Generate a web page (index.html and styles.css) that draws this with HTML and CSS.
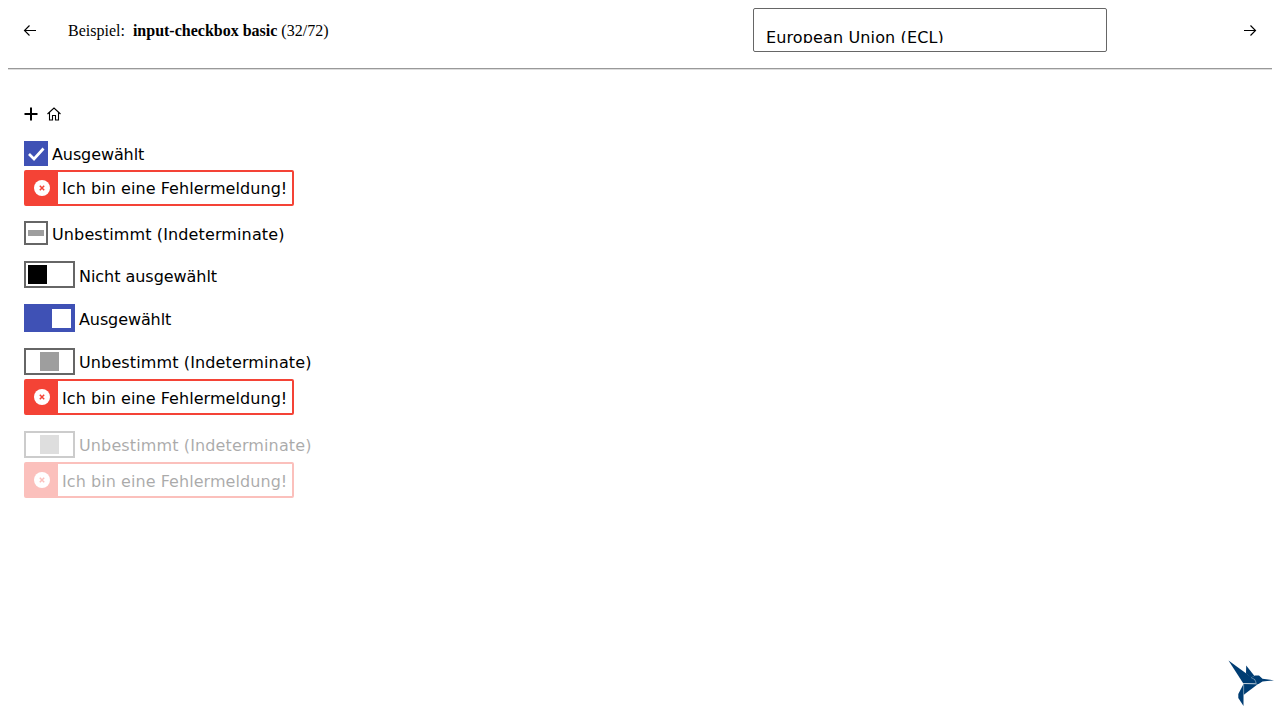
FILE: index.html
```html
<!DOCTYPE html>
<html lang="de">
<head>
<meta charset="utf-8">
<title>input-checkbox basic</title>
<link rel="stylesheet" href="styles.css">
</head>
<body>
<header class="topbar">
  <svg class="arrow" viewBox="0 0 16 16"><path d="M14 8.5H2.5M7.5 3.5l-5 5 5 5"/></svg>
  <div class="title">Beispiel:&nbsp; <b>input-checkbox basic</b> (32/72)</div>
  <div class="select"><div class="option">European Union (ECL)</div></div>
  <svg class="arrow next" viewBox="0 0 16 16"><path d="M2 8.5h11.5M8.5 3.5l5 5-5 5"/></svg>
</header>
<hr class="rule">
<main class="content">
  <div class="icons">
    <svg class="plus" viewBox="0 0 14 14"><path d="M7 .5v13M.5 7h13"/></svg>
    <svg class="home" viewBox="0 0 14 14"><path d="M.5 7L7 1l6.500 6M2.500 5.500v7.500h3V8.500h3V13h3V5.500"/></svg>
  </div>
  <div class="field first">
    <label class="line"><span class="box checked"><svg viewBox="0 0 24 24"><path d="M5 12l5 5L19.500 6.500"/></svg></span><span class="label short">Ausgewählt</span></label>
    <div class="alert"><span class="badge"><svg viewBox="0 0 16 16"><circle cx="8" cy="8" r="8"/><path d="M5.800 5.800l4.400 4.400M10.200 5.800l-4.400 4.400"/></svg></span><span class="message">Ich bin eine Fehlermeldung!</span></div>
  </div>
  <div class="field second">
    <label class="line"><span class="box"><span class="dash"></span></span><span class="label">Unbestimmt (Indeterminate)</span></label>
  </div>
  <div class="field">
    <label class="line"><span class="switch off"><span class="knob"></span></span><span class="label tight">Nicht ausgewählt</span></label>
  </div>
  <div class="field">
    <label class="line"><span class="switch on"><span class="knob"></span></span><span class="label short">Ausgewählt</span></label>
  </div>
  <div class="field">
    <label class="line"><span class="switch mixed"><span class="knob"></span></span><span class="label">Unbestimmt (Indeterminate)</span></label>
    <div class="alert"><span class="badge"><svg viewBox="0 0 16 16"><circle cx="8" cy="8" r="8"/><path d="M5.800 5.800l4.400 4.400M10.200 5.800l-4.400 4.400"/></svg></span><span class="message">Ich bin eine Fehlermeldung!</span></div>
  </div>
  <div class="field disabled">
    <label class="line"><span class="switch mixed"><span class="knob"></span></span><span class="label">Unbestimmt (Indeterminate)</span></label>
    <div class="alert"><span class="badge"><svg viewBox="0 0 16 16"><circle cx="8" cy="8" r="8"/><path d="M5.800 5.800l4.400 4.400M10.200 5.800l-4.400 4.400"/></svg></span><span class="message">Ich bin eine Fehlermeldung!</span></div>
  </div>
</main>
<svg class="bird" viewBox="0 0 60 60">
  <path d="M8.500 8.500L34.500 27.500 36 31.500 23 31z"/>
  <path d="M26.200 13.500L34.500 24 31 25.500 26 21.500z"/>
  <path d="M31 25.800L35 23.500H39L42.500 26.800 54 28.400 42.500 29.600 38.500 32H36L34.500 27.500z"/>
  <path d="M23.500 32H38L23.500 43z"/>
  <path d="M23.500 32V54L18.300 46V42z"/>
  <path class="seam" d="M23 31.500l14 .7M31 25.500l4 2.200 1.500 4M23.700 32v11"/>
</svg>
</body>
</html>
```
FILE: styles.css
```css
* { box-sizing: border-box; }
body { margin: 0; background: #fff; color: #000; font: 16px "Liberation Serif", serif; height: 720px; overflow: hidden; }
.topbar { display: flex; height: 68px; padding: 8px 22px 0; }
.arrow { width: 16px; height: 16px; margin-top: 14px; fill: none; stroke: #000; stroke-width: 1.15; }
.title { width: 685px; margin-left: 30px; padding-top: 14px; line-height: 18px; white-space: nowrap; }
.select { width: 354px; height: 44px; border: 1px solid #666; border-radius: 2px; padding: 18px 12px 8px; }
.option { height: 16px; overflow: hidden; line-height: 22px; font-family: Verdana, "DejaVu Sans", sans-serif; letter-spacing: .13px; }
.next { margin-left: auto; }
.rule { margin: 0 8px; border: 0; height: 2px; border-top: 1px solid #999; border-bottom: 1px solid #ddd; }
.content { padding: 36px 24px 0; font-family: Verdana, "DejaVu Sans", sans-serif; }
.icons { display: flex; align-items: center; gap: 9px; height: 16px; }
.plus, .home { width: 14px; height: 14px; fill: none; stroke: #000; }
.plus { stroke-width: 2; }
.home { stroke-width: 1.1; }
.field { width: 300px; margin-top: 16px; }
.line { display: flex; align-items: center; gap: 4px; }
.label, .message, .option { white-space: nowrap; }
.label { padding-top: 2px; letter-spacing: .125px; }
.short { letter-spacing: -.1px; }
.tight { letter-spacing: -.04px; padding-top: 4px; }
.first { margin-top: 19px; }
.second { margin-top: 15px; }
.box { display: flex; align-items: center; justify-content: center; width: 24px; height: 24px; border: 2px solid #666; }
.checked { height: 25px; border: 0; background: #3f51b5; }
.checked svg { width: 24px; height: 24px; fill: none; stroke: #fff; stroke-width: 2.7; }
.dash { width: 16px; height: 6px; background: #9e9e9e; }
.switch { display: flex; align-items: center; width: 51px; height: 27px; padding: 0 2px; border: 2px solid #666; }
.knob { width: 19px; height: 19px; background: #000; }
.on { height: 28px; justify-content: flex-end; background: #3f51b5; border-color: #3f51b5; }
.on .knob { background: #fff; }
.mixed { padding-left: 14px; }
.mixed .knob { background: #9e9e9e; }
.alert { display: flex; width: 270px; height: 36px; margin-top: 4px; border: 2px solid #f44336; border-radius: 2px; }
.badge { display: flex; align-items: center; width: 32px; padding-left: 8px; background: #f44336; }
.badge svg { width: 16px; height: 16px; fill: #fff; stroke: #f44336; stroke-width: 1.5; }
.badge circle { stroke: none; }
.message { padding: 8px 0 0 4px; line-height: 19px; letter-spacing: .06px; }
.first .message { padding-top: 7px; }
.disabled { opacity: .33; }
.bird { position: absolute; left: 1220px; top: 652px; width: 60px; height: 60px; fill: #003d73; }
.seam { fill: none; stroke: #8ba9c0; stroke-width: .6; }
```
